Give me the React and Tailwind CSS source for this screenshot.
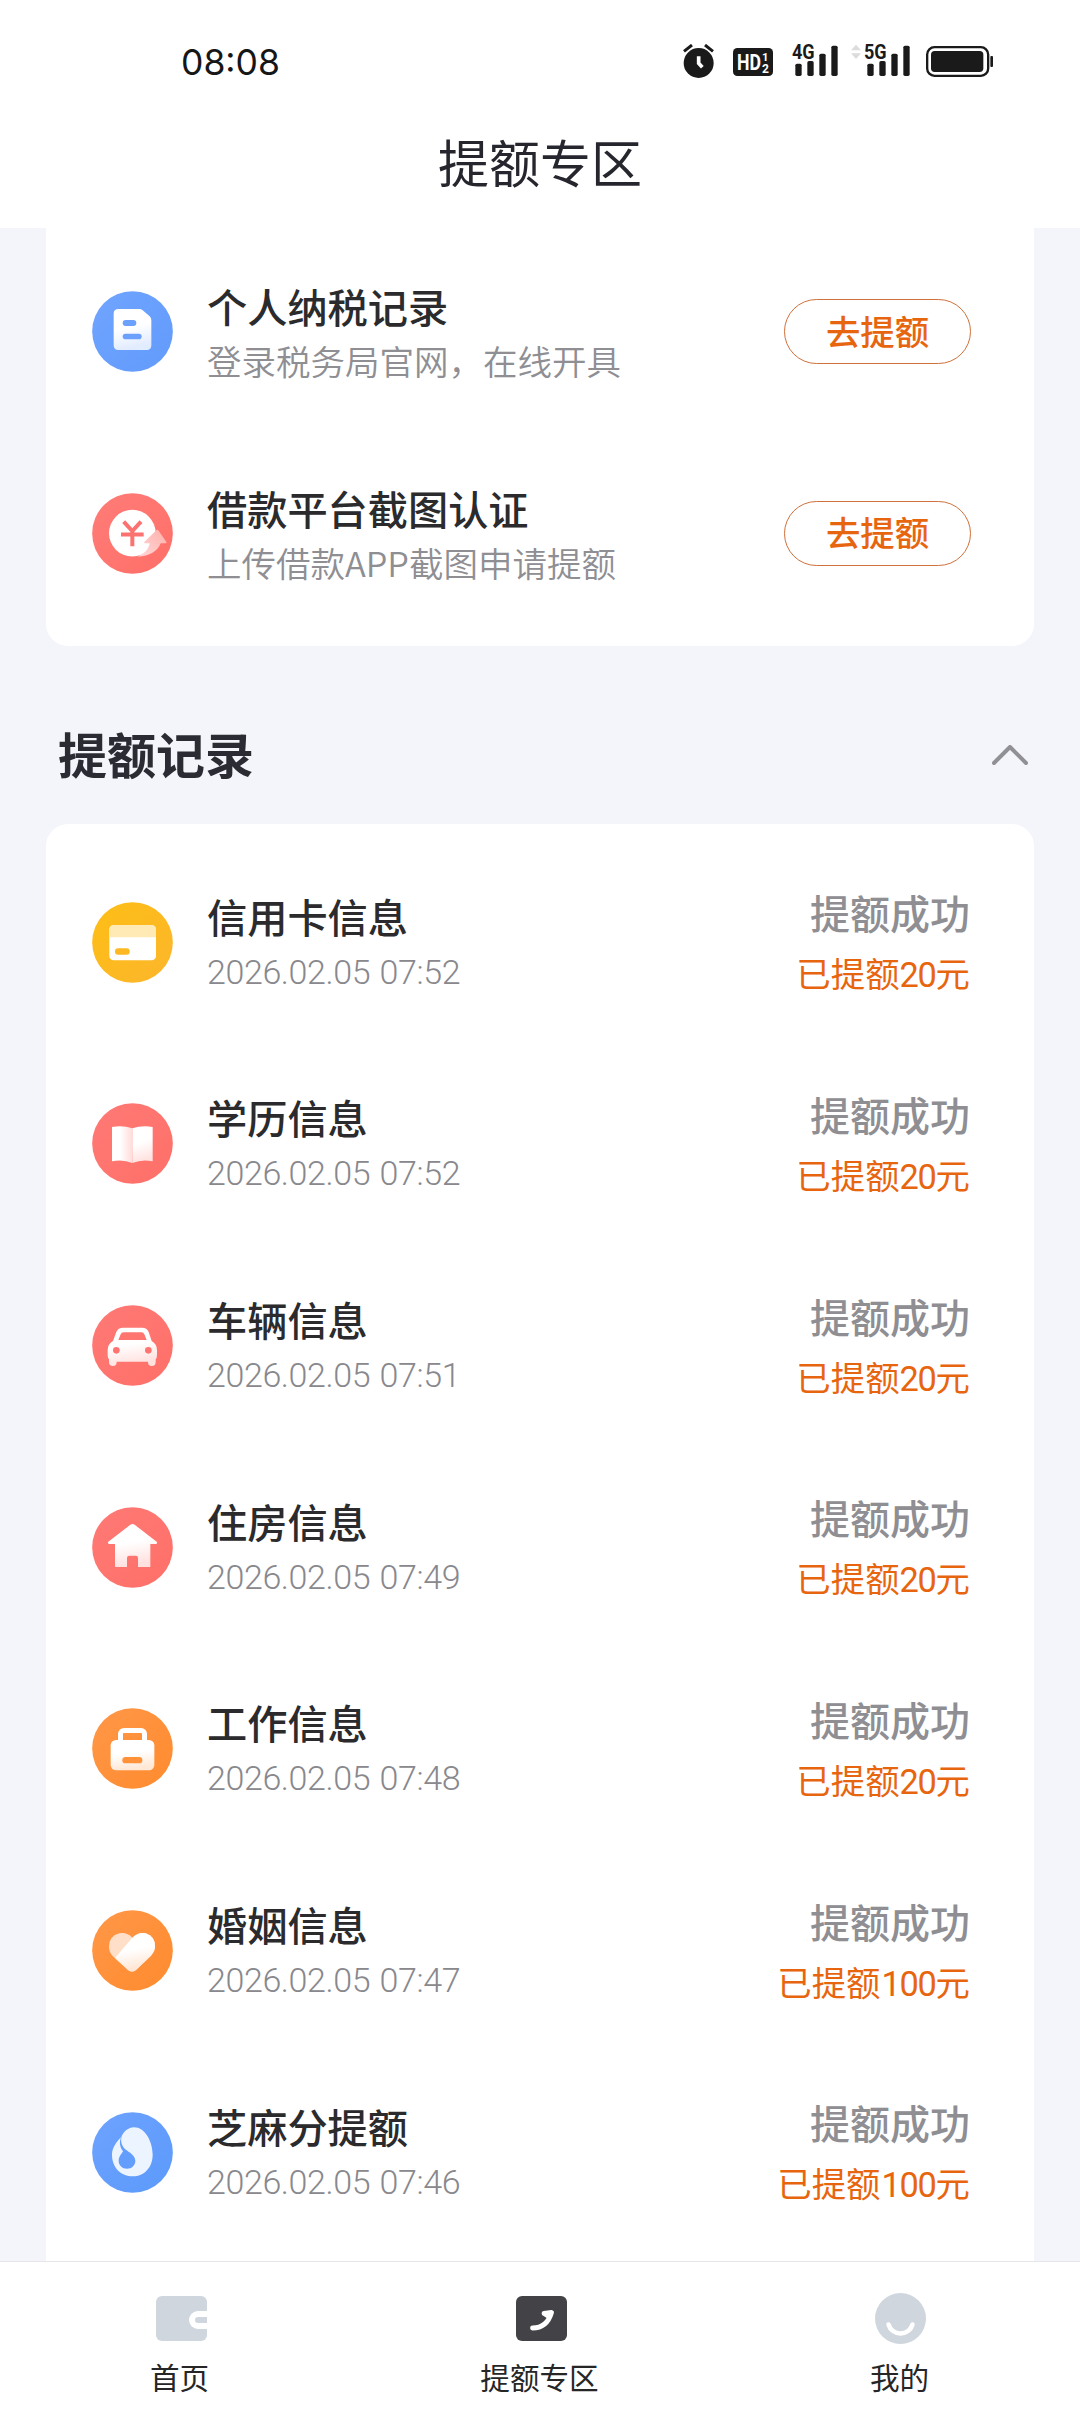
import clsx from "clsx";

const tasks = [
    {
        id: "tax",
        icon: DocIcon,
        title: "个人纳税记录",
        desc: "登录税务局官网，在线开具",
    },
    {
        id: "platform",
        icon: YenIcon,
        title: "借款平台截图认证",
        desc: "上传借款APP截图申请提额",
    },
];

const records = [
    { icon: CardIcon, title: "信用卡信息", time: "2026.02.05 07:52", amount: 20 },
    { icon: BookIcon, title: "学历信息", time: "2026.02.05 07:52", amount: 20 },
    { icon: CarIcon, title: "车辆信息", time: "2026.02.05 07:51", amount: 20 },
    { icon: HouseIcon, title: "住房信息", time: "2026.02.05 07:49", amount: 20 },
    { icon: BagIcon, title: "工作信息", time: "2026.02.05 07:48", amount: 20 },
    { icon: HeartIcon, title: "婚姻信息", time: "2026.02.05 07:47", amount: 100 },
    { icon: DropIcon, title: "芝麻分提额", time: "2026.02.05 07:46", amount: 100 },
];

function Round({ id, from, to, soft, children }) {
    return (
        <svg viewBox="0 0 243 243" className="w-[81px] h-[81px] shrink-0">
            <defs>
                <linearGradient id={`${id}-bg`} x1="0" y1="0" x2="1" y2="1">
                    <stop offset="0" stopColor={from} />
                    <stop offset="1" stopColor={to} />
                </linearGradient>
                <linearGradient id={`${id}-fg`} x1="0" y1="0" x2="0.2" y2="1">
                    <stop offset="0.5" stopColor="#fff" />
                    <stop offset="1" stopColor={soft} />
                </linearGradient>
            </defs>
            <circle cx="121.5" cy="121.5" r="121" fill={`url(#${id}-bg)`} />
            {children}
        </svg>
    );
}

function DocIcon() {
    return (
        <Round id="doc" from="#70a4ff" to="#629bfc" soft="#e2ecff">
            <path
                d="M79 54h63q6 0 10 4l21 18q5 5 5 12v75q0 14-14 14H79q-14 0-14-14V68q0-14 14-14z"
                fill="url(#doc-fg)"
            />
            <rect x="92" y="87" width="41" height="18" rx="9" fill="#6ba0fd" />
            <rect x="92" y="128" width="57" height="17" rx="8.5" fill="#6ba0fd" />
        </Round>
    );
}

function YenIcon() {
    return (
        <Round id="yen" from="#ff7c78" to="#ff6f68" soft="#ffdedb">
            <defs>
                <linearGradient id="yen-arrow" x1="1" y1="0" x2="0" y2="1">
                    <stop offset="0" stopColor="#ffb0ac" />
                    <stop offset="1" stopColor="#ffd9d7" />
                </linearGradient>
            </defs>
            <circle cx="121" cy="120.5" r="70" fill="#fff" />
            <path
                d="M95 86l26 28 26-28M121 114v46M87 124.500h68"
                fill="none"
                stroke="#fb7370"
                strokeWidth="12"
            />
            <path
                d="M193 112q3-3 6 0l24 35q2 4-3 4h-14c-8 22-34 40-70 40 20-8 34-22 37-40h-14q-4 0-2-4z"
                fill="url(#yen-arrow)"
            />
        </Round>
    );
}

function CardIcon() {
    return (
        <Round id="card" from="#fdbe15" to="#fcb62c" soft="#fff">
            <rect x="52" y="70" width="140" height="105" rx="13" fill="#fff" />
            <path d="M52 106V83q0-13 13-13h114q13 0 13 13v23z" fill="#ffe9b4" />
            <rect x="69" y="139" width="44" height="19" rx="9" fill="#fcb924" />
        </Round>
    );
}

function BookIcon() {
    return (
        <Round id="book" from="#ff7975" to="#ff7069" soft="#ffe3e1">
            <defs>
                <linearGradient id="book-left">
                    <stop offset="0.4" stopColor="#fff" />
                    <stop offset="1" stopColor="#ffdcda" />
                </linearGradient>
            </defs>
            <path d="M60 72q32-6 61 4v104q-29-12-61-5z" fill="url(#book-left)" />
            <path d="M121 76q29-10 61-4v103q-32-7-61 5z" fill="url(#book-fg)" />
        </Round>
    );
}

function CarIcon() {
    return (
        <Round id="car" from="#ff7975" to="#ff7069" soft="#ffe2e0">
            <path
                fillRule="evenodd"
                d="M93 68h57q15 0 20 13l9 27q16 9 16 28v15q0 8-4 12v7q0 13-12 13-11 0-11-13H74q0 13-11 13-12 0-12-13v-7q-4-4-4-12v-15q0-19 16-28l10-27q5-13 20-13zM95 82q-7 0-9 6l-7 17h85l-7-17q-2-6-9-6z"
                fill="url(#car-fg)"
            />
            <circle cx="73" cy="136" r="10" fill="#ff7470" />
            <circle cx="169" cy="136" r="10" fill="#ff7470" />
        </Round>
    );
}

function HouseIcon() {
    return (
        <Round id="house" from="#ff7975" to="#ff7069" soft="#ffe2e0">
            <path
                d="M115 53q6-4 13 0l66 51q4 5-2 7h-17v69h-37v-27q0-7-7-7h-19q-7 0-7 7v27H69v-69H52q-7-2-3-7z"
                fill="url(#house-fg)"
            />
        </Round>
    );
}

function BagIcon() {
    return (
        <Round id="bag" from="#ff9748" to="#ff8b2e" soft="#ffe8d6">
            <rect x="85.500" y="67.500" width="72" height="50" rx="10" fill="none" stroke="#fff" strokeWidth="15" />
            <rect x="56" y="96" width="131" height="91" rx="16" fill="url(#bag-fg)" />
            <rect x="91" y="147" width="60" height="19" rx="9.5" fill="#ff9139" />
        </Round>
    );
}

function HeartIcon() {
    return (
        <Round id="heart" from="#ff9748" to="#ff8b2e" soft="#ffe6d4">
            <path
                d="M121 83q-16-17-39-13-31 8-31 40 0 16 11 28l46 42q12 9 24 0l45-43q12-13 12-28 0-30-28-39-22-5-40 13z"
                fill="#ffdfc8"
            />
            <path
                d="M121 83q18-18 40-13 28 9 28 39 0 15-12 28l-45 43q-12 9-24 0l-39-36z"
                fill="url(#heart-fg)"
            />
        </Round>
    );
}

function DropIcon() {
    return (
        <Round id="drop" from="#6ea2ff" to="#5b9afb" soft="#e9f2ff">
            <path
                d="M126 46c32 0 56 41 56 82 0 38-26 65-59 65-36 0-63-26-63-65 0-20 13-38 27-52 8-17 22-30 39-30z"
                fill="#ecf4ff"
            />
            <path
                d="M92 66c-7 14-6 29 4 42 7 9 34 19 34 38 0 14-11 24-25 24s-25-10-25-24c0-13 9-20 13-28-12-16-12-34-1-52z"
                fill="#649efd"
            />
        </Round>
    );
}

function Signal({ label }) {
    return (
        <svg viewBox="396 72 138 102" className="w-[46px] h-[34px] overflow-visible" fill="#1a1a1a">
            <text
                x="396"
                y="117"
                textLength="68"
                lengthAdjust="spacingAndGlyphs"
                className="font-['Roboto'] font-bold text-[62px]"
            >
                {label}
            </text>
            <rect x="406" y="131" width="19" height="37" rx="5" />
            <rect x="442" y="123" width="19" height="45" rx="5" />
            <rect x="478" y="101" width="19" height="67" rx="5" />
            <rect x="514" y="77" width="19" height="91" rx="5" />
        </svg>
    );
}

function StatusBar() {
    return (
        <div className="h-[122px] flex items-center justify-between pl-[181px] pr-[87px]">
            <span className="font-['Inter'] text-[35.500px] text-[#161616] mt-[4px]">08:08</span>
            <div className="flex items-center">
                <svg viewBox="70 72 93 102" className="w-[31px] h-[34px]">
                    <circle cx="117" cy="129" r="45" fill="#1a1a1a" />
                    <path d="M73 94l24-19M160 94l-24-19" stroke="#1a1a1a" strokeWidth="9" />
                    <path d="M117 109v21l11 12" fill="none" stroke="#fff" strokeWidth="11" />
                </svg>
                <svg viewBox="219 72 120 102" className="w-[40px] h-[34px] ml-[19px]">
                    <rect x="219" y="84" width="120" height="84" rx="13" fill="#1a1a1a" />
                    <g fill="#fff" className="font-['Roboto'] font-bold">
                        <text x="231" y="150" textLength="72" lengthAdjust="spacingAndGlyphs" className="text-[66px]">
                            HD
                        </text>
                        <text x="306" y="122" className="text-[34px]">1</text>
                        <text x="306" y="158" className="text-[36px]">2</text>
                    </g>
                </svg>
                <div className="ml-[19px]">
                    <Signal label="4G" />
                </div>
                <svg viewBox="572 72 30 102" className="w-[10px] h-[34px] ml-[13px]" fill="#dcdcdc">
                    <path d="M572 91l15-17 15 17zM572 100l15 17 15-17z" />
                </svg>
                <div className="ml-[3px]">
                    <Signal label="5G" />
                </div>
                <svg viewBox="798 72 201 102" className="w-[67px] h-[34px] ml-[16px]">
                    <rect x="801.500" y="81.500" width="183" height="86" rx="22" fill="none" stroke="#1a1a1a" strokeWidth="7" />
                    <rect x="813" y="93" width="157" height="63" rx="11" fill="#1a1a1a" />
                    <rect x="991" y="108" width="8" height="33" rx="3" fill="#1a1a1a" />
                </svg>
            </div>
        </div>
    );
}

function Row({ icon: Icon, title, children, right }) {
    return (
        <li className="h-[201.67px] flex items-center pl-[46px] pr-[63px]">
            <Icon />
            <div className="ml-[34px] flex-1 pt-[4px]">
                <h3 className="text-[40.200px] leading-[56px] font-medium text-[#2b2b2d]">{title}</h3>
                {children}
            </div>
            {right}
        </li>
    );
}

function NavItem({ label, children }) {
    return (
        <li className="flex-1 flex flex-col items-center">
            <div className="h-[51px] mt-[31px] flex items-center justify-center">{children}</div>
            <span className="mt-[13px] mr-[1px] text-[29.600px] leading-[40px] text-[#262626]">{label}</span>
        </li>
    );
}

function App() {
    return (
        <div className="w-[1080px] h-[2412px] flex flex-col overflow-hidden bg-[#f4f5fa] font-['Noto_Sans_CJK_SC',sans-serif]">
            <header className="h-[228px] shrink-0 bg-white">
                <StatusBar />
                <h1 className="text-center text-[51px] leading-[78px] text-[#26262e]">提额专区</h1>
            </header>

            <main className="flex-1 min-h-0 overflow-hidden px-[46px] flex flex-col">
                <ul className="h-[418px] shrink-0 pt-[3px] bg-white rounded-b-[22px]">
                    {tasks.map((task) => (
                        <Row
                            key={task.id}
                            icon={task.icon}
                            title={task.title}
                            right={
                                <button className="w-[187px] h-[65px] pb-[4px] rounded-full border border-[#d0703a] text-[34.400px] leading-none font-medium text-[#e8650f]">
                                    去提额
                                </button>
                            }
                        >
                            <p className="text-[34.500px] leading-[52px] pb-[3px] font-[350] text-[#8e8e93]">
                                {task.desc}
                            </p>
                        </Row>
                    ))}
                </ul>

                <div className="h-[178px] shrink-0 pt-[39px] flex items-center justify-between pl-[12px] pr-[6px]">
                    <h2 className="text-[49px] leading-[60px] font-bold text-[#2b2b33] mb-[4px]">提额记录</h2>
                    <svg viewBox="0 0 36 20" className="w-[36px] h-[20px]">
                        <path
                            d="M2 18L18 2l16 16"
                            fill="none"
                            stroke="#919195"
                            strokeWidth="4"
                            strokeLinecap="round"
                            strokeLinejoin="round"
                        />
                    </svg>
                </div>

                <ul className="flex-1 pt-[17.500px] bg-white rounded-t-[22px]">
                    {records.map((record) => (
                        <Row
                            key={record.title}
                            icon={record.icon}
                            title={record.title}
                            right={
                                <div className="text-right pt-[3px] pr-[1px]">
                                    <p className="text-[40px] leading-[60px] font-medium text-[#8e8e93]">提额成功</p>
                                    <p className="text-[34.400px] leading-[60px] text-[#e8650f]">
                                        已提额
                                        <span
                                            className={clsx(
                                                "font-['Roboto'] font-normal tracking-[-1.3px]",
                                                record.amount >= 100 && "ml-[1px]"
                                            )}
                                        >
                                            {record.amount}
                                        </span>
                                        元
                                    </p>
                                </div>
                            }
                        >
                            <p className="font-['Roboto'] text-[34px] leading-[57px] font-[350] tracking-[-0.4px] [word-spacing:1.500px] text-[#88888d]">
                                {record.time}
                            </p>
                        </Row>
                    ))}
                </ul>
            </main>

            <nav className="h-[151px] shrink-0 bg-white border-t border-[#e6e6ea]">
                <ul className="flex">
                    <NavItem label="首页">
                        <svg viewBox="0 0 51 45" className="w-[51px] h-[45px] ml-[3px]">
                            <rect width="51" height="45" rx="6" fill="#d0d6de" />
                            <path d="M51 15H42a9 9 0 0 0 0 18h9z" fill="#fff" />
                            <path d="M51 21H42a3 3 0 0 0 0 6h9z" fill="#d0d6de" />
                        </svg>
                    </NavItem>
                    <NavItem label="提额专区">
                        <svg viewBox="0 0 51 45" className="w-[51px] h-[45px] ml-[3px]">
                            <rect width="51" height="45" rx="6" fill="#434246" />
                            <path
                                d="M16.500 32Q31 32 35.500 16.500L28 17.500M29 18l4.500 3"
                                fill="none"
                                stroke="#fff"
                                strokeWidth="4.800"
                                strokeLinecap="round"
                                strokeLinejoin="round"
                            />
                        </svg>
                    </NavItem>
                    <NavItem label="我的">
                        <svg viewBox="0 0 51 51" className="w-[51px] h-[51px]">
                            <circle cx="25.500" cy="25.500" r="25.500" fill="#d0d6de" />
                            <path d="M13.500 31.500a12.500 12.500 0 0 0 24 0" fill="none" stroke="#fff" strokeWidth="4.500" strokeLinecap="round" />
                        </svg>
                    </NavItem>
                </ul>
            </nav>
        </div>
    );
}

export default App;
